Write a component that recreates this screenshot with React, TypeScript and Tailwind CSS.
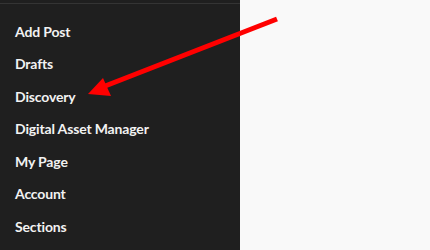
const items = [
  "Add Post",
  "Drafts",
  "Discovery",
  "Digital Asset Manager",
  "My Page",
  "Account",
  "Sections",
];

export default function App() {
  return (
    <div className="relative flex w-[430px] h-[250px] overflow-hidden bg-[#f9f9f9] font-['Lato',sans-serif]">
      <nav className="w-[240px] h-full bg-[#1f1f1f]">
        <div className="h-[3px]" />
        <div className="h-px bg-[#343434]" />
        <ul className="flex flex-col pt-[11px] pl-[15px]">
          {items.map((item) => (
            <li
              key={item}
              className="h-[32.5px] flex items-center text-[14px] font-bold tracking-[-0.15px] text-[#f2f2f2]"
            >
              {item}
            </li>
          ))}
        </ul>
      </nav>
      <svg
        className="absolute left-0 top-0 pointer-events-none"
        width="430"
        height="250"
        viewBox="0 0 430 250"
      >
        <line x1="277" y1="19" x2="100" y2="88" stroke="#ff0000" strokeWidth="5" />
        <polygon points="88,94 103,78 111,96" fill="#ff0000" />
      </svg>
    </div>
  );
}
